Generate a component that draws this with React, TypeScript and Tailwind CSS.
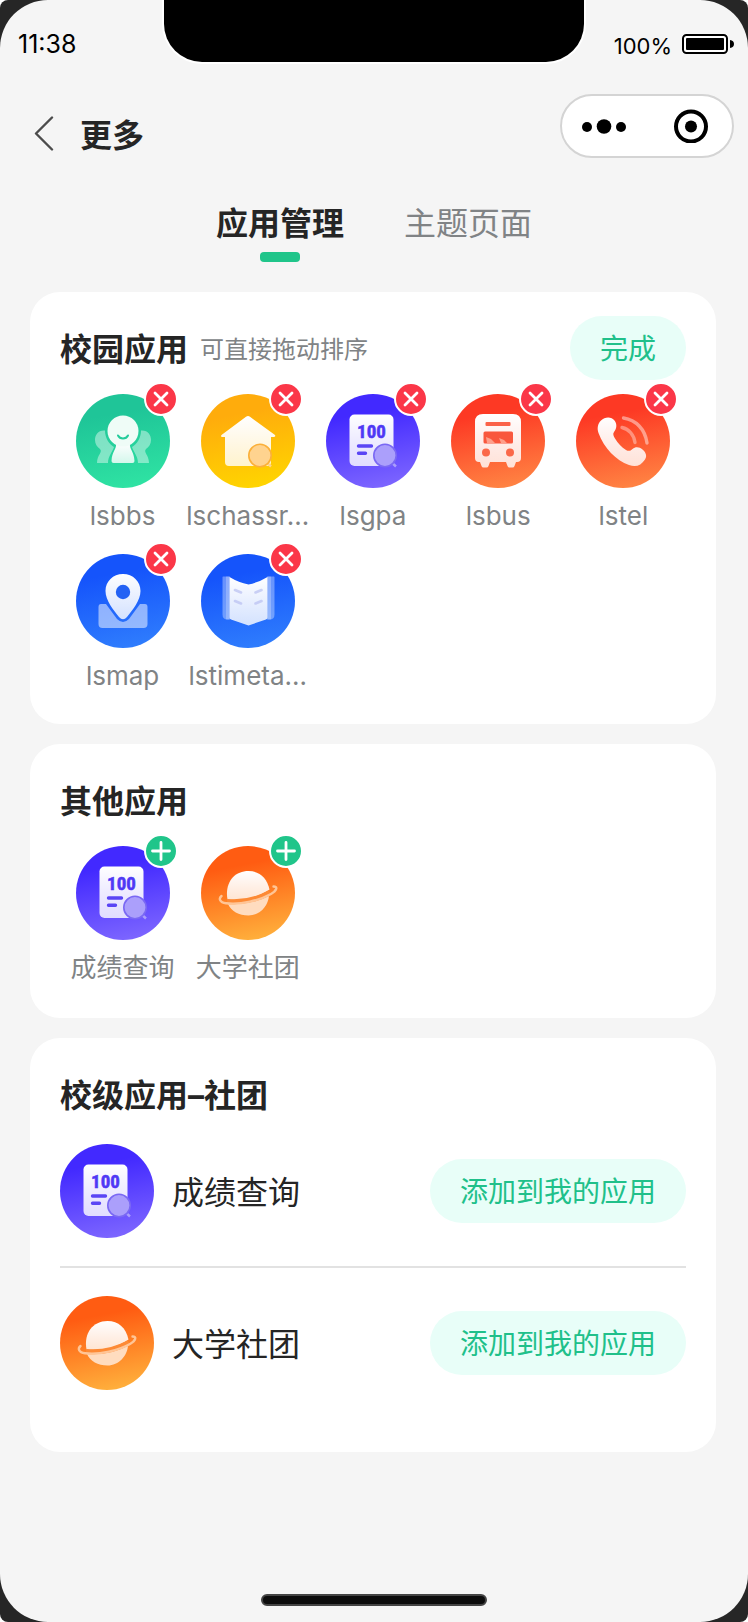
import { useId, type ReactNode } from 'react';

type IconName = 'forum' | 'house' | 'score' | 'bus' | 'phone' | 'map' | 'book' | 'planet';

const GRADIENTS: Record<IconName, [string, string]> = {
  forum: ['#1fc598', '#2fe3a3'],
  house: ['#ffac0c', '#ffd500'],
  score: ['#4229ff', '#7d66ff'],
  bus: ['#fd3924', '#ff8443'],
  phone: ['#fd3924', '#ff8443'],
  map: ['#1554fb', '#2f7dfd'],
  book: ['#1554fb', '#2f7dfd'],
  planet: ['#ff5c12', '#ffb03c'],
};

function Magnifier({ fill, ring }: { fill: string; ring: string }) {
  return (
    <>
      <path d="M64 67l6 5.500" stroke={fill} strokeWidth="2.400" />
      <circle cx="59" cy="61.500" r="11.200" fill={fill} stroke={ring} strokeWidth="1.600" />
      <path d="M51 66a10 10 0 0 0 16-9a10 10 0 0 1-16 9z" fill="#fff" opacity=".15" />
    </>
  );
}

function Glyph({ name, soft }: { name: IconName; soft: string }) {
  const white = `url(#${soft})`;
  switch (name) {
    case 'forum':
      return (
        <>
          <g fill="#fff" opacity=".42">
            <path d="M29 36.500C22 36 19 41 19 46c0 4 2 7 5 9 3 3-3 6-3 14h11c0-7 5-12 6-16-5-3-9-9-9-16.500z" />
            <path d="M65 36.500c7-.5 10 4.500 10 9.500 0 4-2 7-5 9-3 3 3 6 3 14H62c0-7-5-12-6-16 5-3 9-9 9-16.500z" />
          </g>
          <path d="M40 49h14c-1 6 4 8 4.500 18q0 2-2 2h-19q-2 0-2-2C36 57 41 55 40 49z" fill={white} />
          <circle cx="47" cy="37" r="15.500" fill="#effcf7" />
          <path d="M42 41.500c2 4 8 4 10 0" fill="none" stroke="#25cc9c" strokeWidth="2" strokeLinecap="round" />
        </>
      );
    case 'house':
      return (
        <>
          <path d="M45 22.800q2-1.600 4 0L74 41q1 2-1.500 2H70v25q0 4-4 4H28q-4 0-4-4V43h-2.500Q19 43 20.500 41z" fill={white} />
          <Magnifier fill="#ffd38f" ring="#fbb03a" />
        </>
      );
    case 'score':
      return (
        <>
          <rect x="23.500" y="20.500" width="44" height="51.500" rx="5" fill={white} />
          <text
            x="45.500"
            y="44"
            textAnchor="middle"
            fill="#4f38f5"
            stroke="#4f38f5"
            strokeWidth=".5"
            className="font-['Liberation_Sans_Narrow','Roboto_Condensed',sans-serif] text-[19px] font-bold"
          >
            100
          </text>
          <path d="M32.500 52h13M32.500 59.300h7" stroke="#5a45f5" strokeWidth="3.400" strokeLinecap="round" />
          <Magnifier fill="#ab9ffb" ring="#7a68f4" />
        </>
      );
    case 'bus':
      return (
        <>
          <path d="M32 20h30q8 0 8 8v36q0 4-4 4h-1l-1.500 4q-.5 1.500-2 1.500h-3q-1.500 0-2-1.500L55 68H39l-1.500 4q-.5 1.500-2 1.500h-3q-1.500 0-2-1.500L29 68h-1q-4 0-4-4V28q0-8 8-8z" fill={white} />
          <rect x="34.500" y="28" width="25" height="4" rx="1" fill="#fb6249" />
          <rect x="32.500" y="37.500" width="29.500" height="12" rx="1.500" fill="#f9573d" />
          <path d="M35 43l5 2 4 4h-8zM48 44l5 2 3 3h-6z" fill="#ffb7a5" opacity=".75" />
          <circle cx="35" cy="58.500" r="4" fill="#fb6849" />
          <circle cx="59" cy="58.500" r="4" fill="#fb6849" />
        </>
      );
    case 'phone':
      return (
        <>
          <path
            d="M25 26.500c4-4 10.500-4 13.500 0 3 4 2 8.500-.5 11.500-1.500 2-.5 4 1 6.500 3 5 6.500 8.500 11 11.500 2.500 1.500 4.500 1 6.500-1 3-2.500 7-2 10 .5 4 3.500 4.500 7 2.500 10-4 6-9 8-16 5.500C40 66.500 28 54 22.500 39c-1.500-4.500-1-9 2.500-12.500z"
            fill={white}
          />
          <path d="M46 33.500c7 1.500 12 7.500 13 15" fill="none" stroke="#fff" strokeWidth="3.400" strokeLinecap="round" opacity=".38" />
          <path d="M47.500 24c12.500 2 21.500 11 23.500 25" fill="none" stroke="#fff" strokeWidth="3.400" strokeLinecap="round" opacity=".45" />
        </>
      );
    case 'map':
      return (
        <>
          <path d="M25 50h5l11 15q6 6 12 0l11-15h5q2.500 0 2.500 3v17q0 4-4 4h-41q-4 0-4-4V53q0-3 2.500-3z" fill="#fff" opacity=".5" />
          <path d="M47 20c10 0 17.500 7.500 17.500 17 0 9.500-8 19-13.500 26q-4 4.500-8 0C37.500 56 29.500 46.500 29.500 37 29.500 27.500 37 20 47 20z" fill={white} />
          <circle cx="47" cy="38" r="7.200" fill="#2462f4" />
        </>
      );
    case 'book':
      return (
        <>
          <path d="M22 22.500h6.500V65.500h-2q-5 0-5-5V23zM73 22.500h-6.500V65.500h2q5 0 5-5V23z" fill="#fff" opacity=".35" />
          <path d="M25 22.500h4v43h-4zM70 22.500h-4v43h4z" fill="#fff" opacity=".25" />
          <path d="M28.500 23q9 5.500 19 7.500 10-2 19-7.500V63.500q0 1.500-1.500 2L47.500 71.500 30 65.500q-1.500-.5-1.500-2z" fill={white} />
          <path d="M34 36l6 2.500M34 47l6 2.500M60.500 36l-6 2.500M60.500 47l-6 2.500" stroke="#b9c0f2" strokeWidth="2.600" strokeLinecap="round" opacity=".7" />
        </>
      );
    case 'planet':
      return (
        <>
          <path d="M27 58q21 1 41-8c-1 10-9 19.500-20.500 19.500C38 69.500 30 65 27 58z" fill="#ffdcbf" />
          <path d="M26.500 53.500C23.500 37 33 25 47.500 25c11 0 18.500 7 21 18.500-12 8-26 11.500-42 10z" fill={white} />
          <path d="M26 55.500c15 1.500 31-2.500 43-9" fill="none" stroke="#fd8a35" strokeWidth="5" />
          <path d="M20.500 50c-3 2.500-2 6.500 4.500 7.200 15 1.800 34-3 45-9.200 6-3.500 7-7.500 2.500-7.500" fill="none" stroke="#ffc596" strokeWidth="2.400" strokeLinecap="round" />
        </>
      );
  }
}

function AppIcon({ name }: { name: IconName }) {
  const id = useId().replace(/[^a-zA-Z0-9]/g, '');
  const [from, to] = GRADIENTS[name];
  return (
    <svg viewBox="0 0 94 94" className="block size-[94px] shrink-0" aria-hidden="true">
      <defs>
        <linearGradient id={`${id}bg`} x1=".4" y1="0" x2=".6" y2="1">
          <stop offset="0" stopColor={from} />
          <stop offset=".2" stopColor={from} />
          <stop offset="1" stopColor={to} />
        </linearGradient>
        <linearGradient id={`${id}fg`} x1="0" y1="0" x2="0" y2="1">
          <stop offset="0" stopColor="#fff" />
          <stop offset="1" stopColor="#fff" stopOpacity=".8" />
        </linearGradient>
      </defs>
      <circle cx="47" cy="47" r="47" fill={`url(#${id}bg)`} />
      <Glyph name={name} soft={`${id}fg`} />
    </svg>
  );
}

function Badge({ kind, app }: { kind: 'remove' | 'add'; app: string }) {
  const remove = kind === 'remove';
  return (
    <button
      type="button"
      aria-label={`${remove ? '移除' : '添加'} ${app}`}
      className="absolute -top-3 -right-2 size-[34px] rounded-full"
    >
      <svg viewBox="0 0 34 34" className="block size-full">
        <circle cx="17" cy="17" r="16" fill={remove ? '#fb3748' : '#20c58a'} stroke="#fff" strokeWidth="2" />
        <path
          d={remove ? 'M11 11l12 12M23 11L11 23' : 'M17 8.500v17M8.500 17h17'}
          stroke="#fff"
          strokeWidth="2.800"
          strokeLinecap="round"
        />
      </svg>
    </button>
  );
}

function AppGrid({ apps, kind }: { apps: { icon: IconName; label: string }[]; kind: 'remove' | 'add' }) {
  return (
    <ul className="mt-1 grid grid-cols-5">
      {apps.map((app) => (
        <li key={app.label} className="flex h-40 min-w-0 flex-col items-center pt-2.5">
          <div className="relative">
            <AppIcon name={app.icon} />
            <Badge kind={kind} app={app.label} />
          </div>
          <span className="mt-2.5 text-[26px] leading-9 whitespace-nowrap text-[#808385]">{app.label}</span>
        </li>
      ))}
    </ul>
  );
}

function Card({ title, hint, action, className, children }: {
  title: string;
  hint?: string;
  action?: ReactNode;
  className: string;
  children: ReactNode;
}) {
  return (
    <section className={`rounded-[30px] bg-white px-[30px] pt-6 ${className}`}>
      <header className="flex h-16 items-center">
        <h2 className="pt-1 text-[32px] font-bold">{title}</h2>
        {hint && <span className="ml-3 pt-1 text-2xl text-[#808385]">{hint}</span>}
        {action}
      </header>
      {children}
    </section>
  );
}

function PillButton({ children }: { children: ReactNode }) {
  return (
    <button type="button" className="ml-auto h-16 rounded-full bg-[#e8fef8] px-[30px] pt-0.5 text-[28px] text-[#20c08a]">
      {children}
    </button>
  );
}

const CAMPUS: { icon: IconName; label: string }[] = [
  { icon: 'forum', label: 'lsbbs' },
  { icon: 'house', label: 'lschassr…' },
  { icon: 'score', label: 'lsgpa' },
  { icon: 'bus', label: 'lsbus' },
  { icon: 'phone', label: 'lstel' },
  { icon: 'map', label: 'lsmap' },
  { icon: 'book', label: 'lstimeta…' },
];

const OTHERS: { icon: IconName; label: string }[] = [
  { icon: 'score', label: '成绩查询' },
  { icon: 'planet', label: '大学社团' },
];

export default function App() {
  return (
    <div className="overflow-hidden rounded-lg bg-[#262626] font-[Inter,'Noto_Sans_CJK_SC',sans-serif] text-[#252525]">
      <div className="relative flex min-h-screen flex-col rounded-[48px] bg-[#f5f5f5] pb-4">
        <div className="absolute top-0 left-1/2 h-16 w-[424px] -translate-x-1/2 rounded-b-[40px] border-2 border-t-0 border-white bg-black" />

        <div className="flex h-[94px] items-start justify-between pt-7 pr-3.5 pl-[18px] text-black">
          <span className="text-[25px] leading-8">11:38</span>
          <div className="flex h-8 items-center gap-2.5">
            <span className="pt-1 text-[22px]">100%</span>
            <svg viewBox="0 0 52 20" className="h-5 w-[52px]" role="img" aria-label="电量">
              <rect x="1" y="1" width="44" height="18" rx="3.500" fill="#fff" stroke="#000" strokeWidth="2" />
              <rect x="4" y="4" width="38" height="12" rx="1" />
              <path d="M48 6q4 .5 4 4t-4 4z" />
            </svg>
          </div>
        </div>

        <header className="flex items-start justify-between pr-3.5 pl-[34px]">
          <div className="flex h-20 items-center">
            <button type="button" aria-label="返回" className="py-2">
              <svg viewBox="0 0 20 36" className="block h-9 w-5" fill="none" stroke="#4c4c4c" strokeWidth="2.400" strokeLinecap="round" strokeLinejoin="round">
                <path d="M18 1.500L2 17.500l16 16" />
              </svg>
            </button>
            <h1 className="ml-[26px] pt-1 text-[32px] font-bold">更多</h1>
          </div>
          <div className="flex h-16 w-[174px] items-center justify-between rounded-full border-2 border-[#d4d4d4] bg-white pr-6 pl-[19px]">
            <button type="button" aria-label="菜单">
              <svg viewBox="0 0 46 34" className="block h-[34px] w-[46px]">
                <circle cx="6" cy="18" r="5" />
                <circle cx="23" cy="17.500" r="7.300" />
                <circle cx="40" cy="18" r="5" />
              </svg>
            </button>
            <button type="button" aria-label="关闭">
              <svg viewBox="0 0 34 34" className="block size-[34px]">
                <circle cx="17" cy="17.500" r="15" fill="none" stroke="#000" strokeWidth="4" />
                <circle cx="17" cy="17.500" r="6" />
              </svg>
            </button>
          </div>
        </header>

        <nav className="mt-[26px] flex items-start justify-center gap-[60px] pb-[30px] text-[32px] leading-[48px]">
          <button type="button" className="flex flex-col items-center gap-1 font-bold">
            应用管理
            <span className="h-2.5 w-10 rounded bg-[#20c58a]" />
          </button>
          <button type="button" className="text-[#808385]">主题页面</button>
        </nav>

        <main className="flex flex-col gap-5 pr-8 pl-[30px]">
          <Card title="校园应用" hint="可直接拖动排序" action={<PillButton>完成</PillButton>} className="pb-5">
            <AppGrid apps={CAMPUS} kind="remove" />
          </Card>
          <Card title="其他应用" className="pb-[22px]">
            <AppGrid apps={OTHERS} kind="add" />
          </Card>
          <Card title="校级应用–社团" className="pb-[34px]">
            <ul className="-mt-2.5 divide-y-2 divide-[#e2e2e2]">
              {OTHERS.map((app) => (
                <li key={app.label} className="flex items-center py-7">
                  <AppIcon name={app.icon} />
                  <span className="ml-[18px] pt-1 text-[32px]">{app.label}</span>
                  <PillButton>添加到我的应用</PillButton>
                </li>
              ))}
            </ul>
          </Card>
        </main>

        <div className="mx-auto mt-auto h-3 w-[226px] rounded-full border-2 border-[#444] bg-[#0c0c0c]" />
      </div>
    </div>
  );
}
